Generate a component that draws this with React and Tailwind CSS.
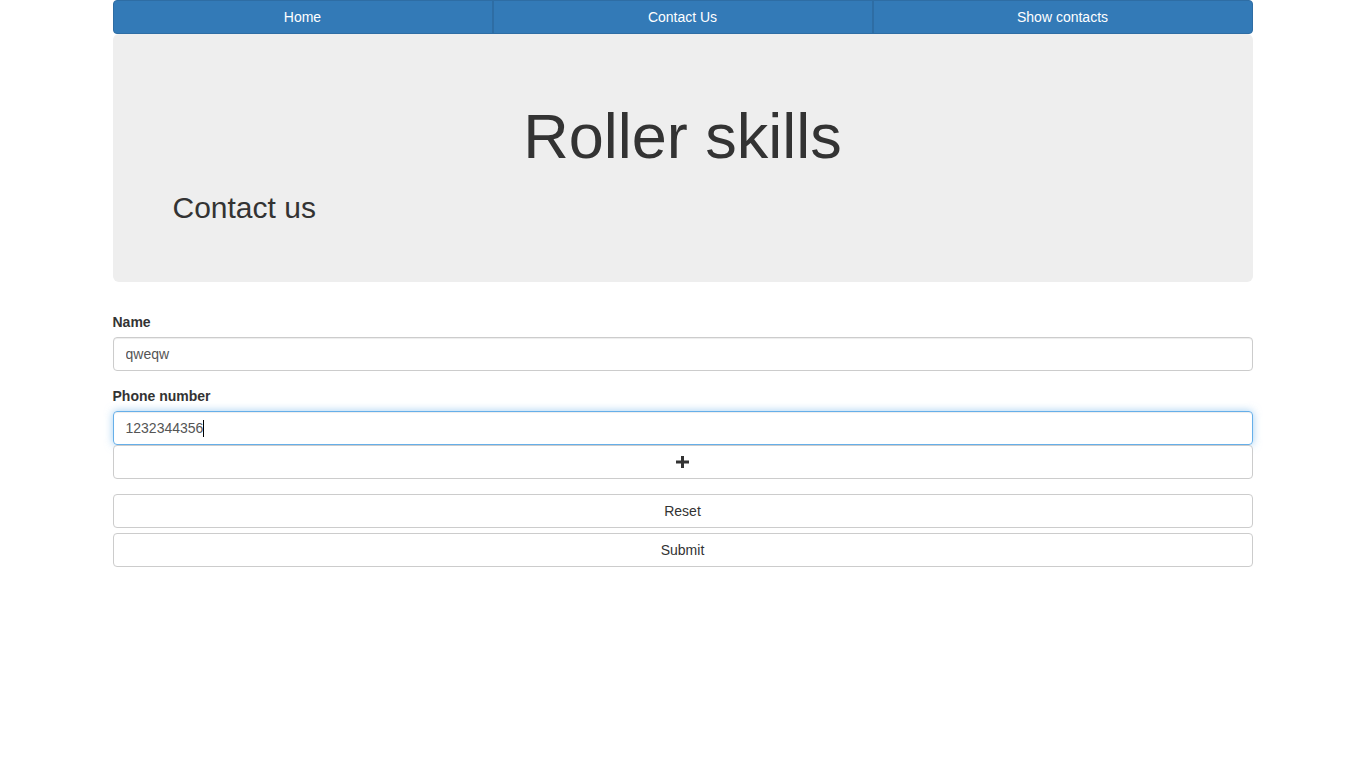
export default function App() {
    const tabs = ["Home", "Contact Us", "Show contacts"]

    return (
        <div className="min-h-[767px] bg-white font-['Liberation_Sans',Arial,sans-serif] text-sm text-[#333]">
            <div className="w-[1140px] mx-auto">
                {/* Nav */}
                <nav className="flex h-[34px] rounded-b-[4px] rounded-t-[4px] border border-[#2e6da4] bg-[#337ab7] overflow-hidden">
                    {tabs.map((t, i) => (
                        <a
                            key={t}
                            href="#"
                            className={
                                "flex-1 flex items-center justify-center text-white leading-5 " +
                                (i < tabs.length - 1 ? "border-r-2 border-[#2e6da4]" : "")
                            }
                        >
                            {t}
                        </a>
                    ))}
                </nav>

                {/* Jumbotron */}
                <div className="bg-[#eeeeee] rounded-md px-[60px] pt-12 pb-12 mb-[30px]">
                    <h1 className="mt-5 text-center text-[63px] leading-[69px] text-[#333]">Roller skills</h1>
                    <h2 className="mt-5 mb-[10px] text-[30px] leading-[33px] text-[#333]">Contact us</h2>
                </div>

                {/* Form */}
                <form className="flex flex-col">
                    <label className="font-bold leading-5 mb-[5px]">Name</label>
                    <input
                        type="text"
                        defaultValue="qweqw"
                        className="h-[34px] px-3 rounded-[4px] border border-[#ccc] text-[#555] shadow-[inset_0_1px_1px_rgba(0,0,0,0.075)] outline-none mb-[15px]"
                    />

                    <label className="font-bold leading-5 mb-[5px]">Phone number</label>
                    <div className="h-[34px] px-3 flex items-center rounded-[4px] border border-[#66afe9] text-[#555] shadow-[inset_0_1px_1px_rgba(0,0,0,0.075),0_0_8px_rgba(102,175,233,0.6)]">
                        <span>1232344356</span>
                        <span className="w-px h-[17px] bg-black"></span>
                    </div>
                    <button type="button" className="h-[34px] flex items-center justify-center rounded-[4px] border border-[#ccc] bg-white text-[#333] mb-[15px]">
                        <svg width="13" height="12" viewBox="0 0 13 12">
                            <path d="M5 0h3v4.5h5v3H8V12H5V7.5H0v-3h5z" fill="#333" />
                        </svg>
                    </button>

                    <button type="reset" className="h-[34px] rounded-[4px] border border-[#ccc] bg-white text-[#333]">
                        Reset
                    </button>
                    <button type="submit" className="h-[34px] mt-[5px] rounded-[4px] border border-[#ccc] bg-white text-[#333]">
                        Submit
                    </button>
                </form>
            </div>
        </div>
    )
}
